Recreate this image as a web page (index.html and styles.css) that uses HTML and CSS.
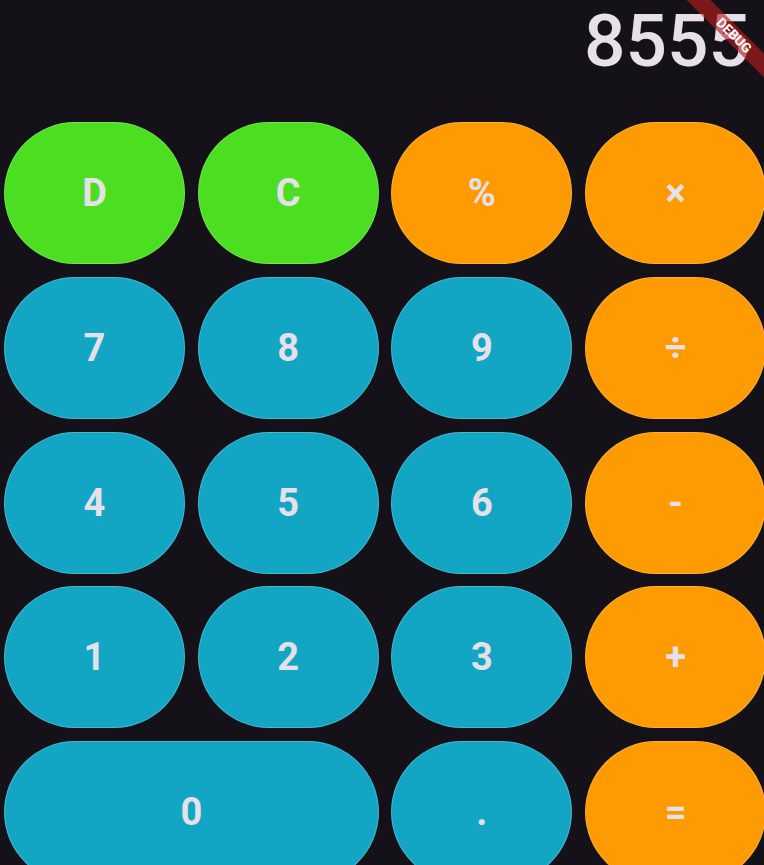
FILE: index.html
```html
<!DOCTYPE html>
<html>
<head>
<meta charset="utf-8">
<link rel="stylesheet" href="styles.css">
</head>
<body>
<div class="app">
  <div class="display">8555</div>
  <div class="pad">
    <div class="key green">D</div>
    <div class="key green">C</div>
    <div class="key orange">%</div>
    <div class="key orange">×</div>
    <div class="key cyan">7</div>
    <div class="key cyan">8</div>
    <div class="key cyan">9</div>
    <div class="key orange">÷</div>
    <div class="key cyan">4</div>
    <div class="key cyan">5</div>
    <div class="key cyan">6</div>
    <div class="key orange">-</div>
    <div class="key cyan">1</div>
    <div class="key cyan">2</div>
    <div class="key cyan">3</div>
    <div class="key orange">+</div>
    <div class="key cyan wide">0</div>
    <div class="key cyan">.</div>
    <div class="key orange">=</div>
  </div>
  <div class="banner">DEBUG</div>
</div>
</body>
</html>
```

FILE: styles.css
```css
html, body {
  margin: 0;
  padding: 0;
  background: #141218;
  overflow: hidden;
  width: 764px;
  height: 865px;
}
.app {
  position: relative;
  width: 764px;
  height: 865px;
  overflow: hidden;
  font-family: Roboto, "Noto Sans", sans-serif;
  color: #E6E0E9;
}
.display {
  height: 122px;
  box-sizing: border-box;
  text-align: right;
  padding-right: 14px;
  padding-top: 1px;
  font-size: 73px;
  line-height: 80px;
  font-weight: 500;
  letter-spacing: 0;
}
.pad {
  display: grid;
  grid-template-columns: repeat(4, 181px);
  grid-auto-rows: 142px;
  column-gap: 12.7px;
  row-gap: 12.8px;
  padding-left: 4px;
}
.key {
  box-sizing: border-box;
  border-radius: 71px;
  display: flex;
  align-items: center;
  justify-content: center;
  font-size: 38px;
  font-weight: 700;
  border: 1px solid rgba(255, 255, 255, 0.22);
}
.wide {
  grid-column: span 2;
}
.green { background: #4CDE21; }
.orange { background: #FE9A02; }
.cyan { background: #12A6C4; }
.banner {
  position: absolute;
  left: 664px;
  top: 27px;
  width: 140px;
  height: 17px;
  background: rgba(183, 28, 28, 0.63);
  transform: rotate(45deg);
  color: #fff;
  font-weight: 700;
  font-size: 13.5px;
  line-height: 17px;
  text-align: center;
}
```
